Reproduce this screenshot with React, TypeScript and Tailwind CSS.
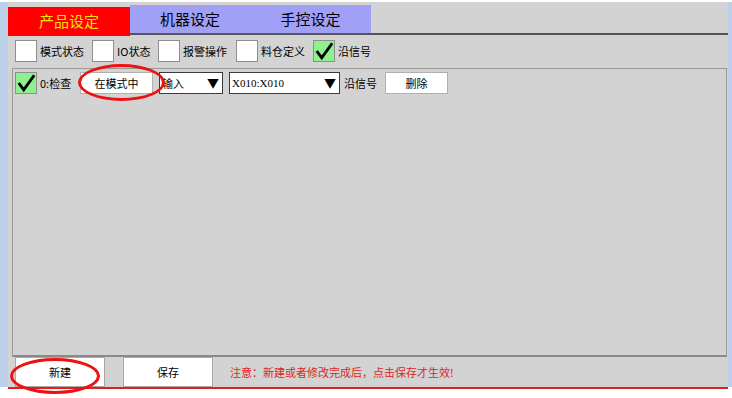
import React from 'react';

const font = { fontFamily: '"Noto Sans CJK SC", "Liberation Sans", sans-serif' };

const CheckMark = () => (
  <svg viewBox="0 0 22 22" className="w-full h-full">
    <path d="M3 11 L8.5 18.5 L20 2.5" fill="none" stroke="#000" strokeWidth="3.2" strokeLinejoin="miter" />
  </svg>
);

const Box = ({ checked = false }: { checked?: boolean }) => (
  <div
    className={`w-[22px] h-[22px] shrink-0 border border-[#8e8e8e] ${checked ? 'bg-[#8ff08f]' : 'bg-white'}`}
  >
    {checked && <CheckMark />}
  </div>
);

const Option = ({ label, checked, width }: { label: string; checked?: boolean; width: string }) => (
  <div className={`flex items-center shrink-0 ${width}`}>
    <Box checked={checked} />
    <span className="ml-[3px] text-[11px] text-black leading-none">{label}</span>
  </div>
);

const Select = ({ value, width, mono }: { value: string; width: string; mono?: boolean }) => (
  <div className={`${width} h-[22px] bg-white border border-[#3a3a3a] flex items-center justify-between pr-[3px]`}>
    <span
      className="text-[11px] leading-none text-black pl-[2px]"
      style={mono ? { fontFamily: '"Liberation Serif", serif' } : undefined}
    >
      {value}
    </span>
    <span className="text-[12px] leading-none text-black">▼</span>
  </div>
);

export default function App() {
  return (
    <div className="relative w-[732px] h-[398px] bg-white overflow-hidden" style={font}>
      <div className="flex pt-[2px] h-[387px]">
        <div className="w-[8px] bg-[#bdd0ea]" />

        <div className="flex-1 bg-[#d3d3d3] flex flex-col">
          {/* tabs */}
          <div className="flex items-end h-[33px]">
            <div className="w-[122px] h-[29px] bg-[#ff0000] flex items-center justify-center text-[15px] text-[#f5e600] mb-[-1px] relative z-10">
              产品设定
            </div>
            <div className="w-[120px] h-[30px] bg-[#a0a0f6] flex items-center justify-center text-[15px] text-black border-b-[2px] border-[#555]">
              机器设定
            </div>
            <div className="w-[121px] h-[30px] bg-[#a0a0f6] flex items-center justify-center text-[15px] text-black border-b-[2px] border-[#555]">
              手控设定
            </div>
            <div className="flex-1 self-stretch border-b-[2px] border-[#555]" />
          </div>

          {/* options row */}
          <div className="flex items-center mt-[5px] pl-[7px] h-[22px]">
            <Option label="模式状态" width="w-[77px]" />
            <Option label="IO状态" width="w-[66px]" />
            <Option label="报警操作" width="w-[78px]" />
            <Option label="料仓定义" width="w-[77px]" />
            <Option label="沿信号" checked width="" />
          </div>

          {/* list panel */}
          <div className="mt-[6px] ml-[4px] mr-[1px] h-[289px] border border-[#9a9a9a] border-b-[#8a8a8a] border-b-2">
            <div className="flex items-center pt-[3px] pl-[2px] h-[25px]">
              <Box checked />
              <span className="ml-[3px] w-[40px] text-[11px] leading-none text-black">0:检查</span>
              <div className="w-[73px] h-[22px] bg-white border border-[#b0b0b0] flex items-center justify-center text-[11px] text-black">
                在模式中
              </div>
              <div className="ml-[6px]">
                <Select value="输入" width="w-[64px]" />
              </div>
              <div className="ml-[6px]">
                <Select value="X010:X010" width="w-[111px]" mono />
              </div>
              <span className="ml-[4px] w-[41px] text-[11px] leading-none text-black">沿信号</span>
              <div className="w-[63px] h-[22px] bg-white border border-[#b0b0b0] flex items-center justify-center text-[11px] text-black">
                删除
              </div>
            </div>
          </div>

          {/* bottom bar */}
          <div className="flex items-center h-[30px] pl-[7px]">
            <div className="w-[90px] h-[30px] bg-white border border-[#a8a8a8] flex items-center justify-center text-[11px] text-black">
              新建
            </div>
            <div className="ml-[18px] w-[90px] h-[30px] bg-white border border-[#a8a8a8] flex items-center justify-center text-[11px] text-black">
              保存
            </div>
            <span className="ml-[17px] text-[11px] text-[#e02424]">注意：新建或者修改完成后，点击保存才生效!</span>
          </div>
        </div>

        <div className="w-[4px] bg-[#bdd0ea]" />
      </div>
      <div className="ml-[8px] mr-[4px] h-[2px] bg-[#e02020]" />

      {/* annotation ellipses */}
      <div className="absolute left-[78px] top-[64px] w-[87px] h-[37px] rounded-[50%] border-[3px] border-[#ee1111]" />
      <div className="absolute left-[10px] top-[358px] w-[90px] h-[36px] rounded-[50%] border-[3px] border-[#ee1111]" />
    </div>
  );
}
